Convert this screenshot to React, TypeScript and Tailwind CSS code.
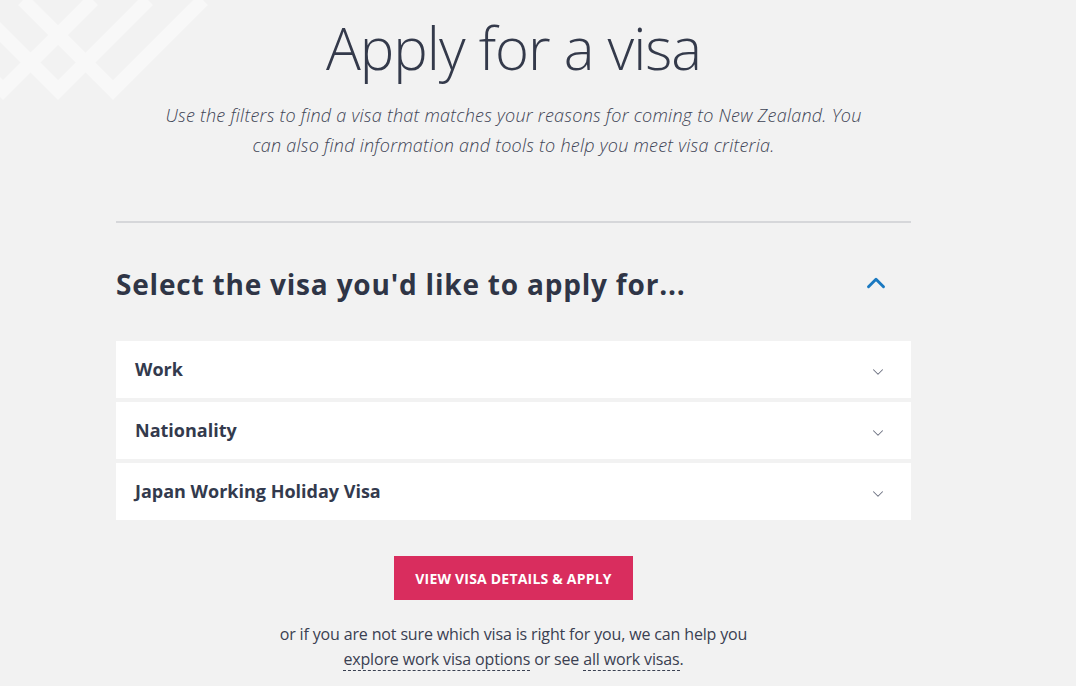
import { ChevronDown, ChevronUp } from "lucide-react";

const filters = ["Work", "Nationality", "Japan Working Holiday Visa"];

function Lattice() {
  return (
    <svg
      className="absolute left-0 top-0"
      width="230"
      height="110"
      viewBox="0 0 230 110"
      fill="none"
    >
      <g stroke="#f8f8f8" strokeWidth="14" strokeLinejoin="miter" strokeMiterlimit="4">
        <polyline points="-87,0 3,90 93,0" />
        <polyline points="-32,0 58,90 148,0" />
        <polyline points="23,0 113,90 203,0" />
      </g>
    </svg>
  );
}

export default function App() {
  return (
    <div
      className="relative min-h-[686px] overflow-hidden bg-[#f2f2f2] text-[#333a4d]"
      style={{ fontFamily: '"Open Sans", "Noto Sans", sans-serif' }}
    >
      <Lattice />
      <div className="relative ml-[116px] w-[795px]">
        <h1 className="pt-[8px] text-center text-[58px] font-light leading-[80px] tracking-[-1px] text-[#343a4b]">
          Apply for a visa
        </h1>
        <p className="mx-auto mt-[12px] w-[700px] text-center text-[18px] font-light italic leading-[30px] tracking-[0.25px] text-[#3e4455]">
          Use the filters to find a visa that matches your reasons for coming to New Zealand. You
          can also find information and tools to help you meet visa criteria.
        </p>

        <div className="mt-[61px] h-[2px] bg-[#d6d7da]" />

        <div className="flex items-center justify-between pb-[37px] pt-[41px]">
          <h2 className="text-[28px] font-bold leading-[40px] tracking-[0.8px] text-[#2f3546]">
            Select the visa you'd like to apply for...
          </h2>
          <ChevronUp className="mb-[3px] mr-[20px] text-[#1b79c1]" size={30} strokeWidth={2.3} />
        </div>

        <div className="flex flex-col gap-[4px]">
          {filters.map((f) => (
            <div
              key={f}
              className="flex h-[57px] items-center justify-between bg-white pl-[19px] pr-[24px]"
            >
              <span className="text-[18px] font-bold text-[#333a4d]">{f}</span>
              <ChevronDown className="mt-[4px] text-[#6b7080]" size={18} strokeWidth={1.4} />
            </div>
          ))}
        </div>

        <div className="mt-[36px] flex justify-center">
          <button className="h-[44px] w-[239px] bg-[#d92d5e] text-[14px] font-bold uppercase tracking-[0.2px] text-white">
            View visa details &amp; apply
          </button>
        </div>

        <p className="mt-[22px] text-center text-[16px] leading-[25px] tracking-[-0.15px] text-[#3a4051]">
          or if you are not sure which visa is right for you, we can help you
          <br />
          <a className="border-b border-dashed border-[#3a4051]">explore work visa options</a> or
          see <a className="border-b border-dashed border-[#3a4051]">all work visas</a>.
        </p>
      </div>
    </div>
  );
}
